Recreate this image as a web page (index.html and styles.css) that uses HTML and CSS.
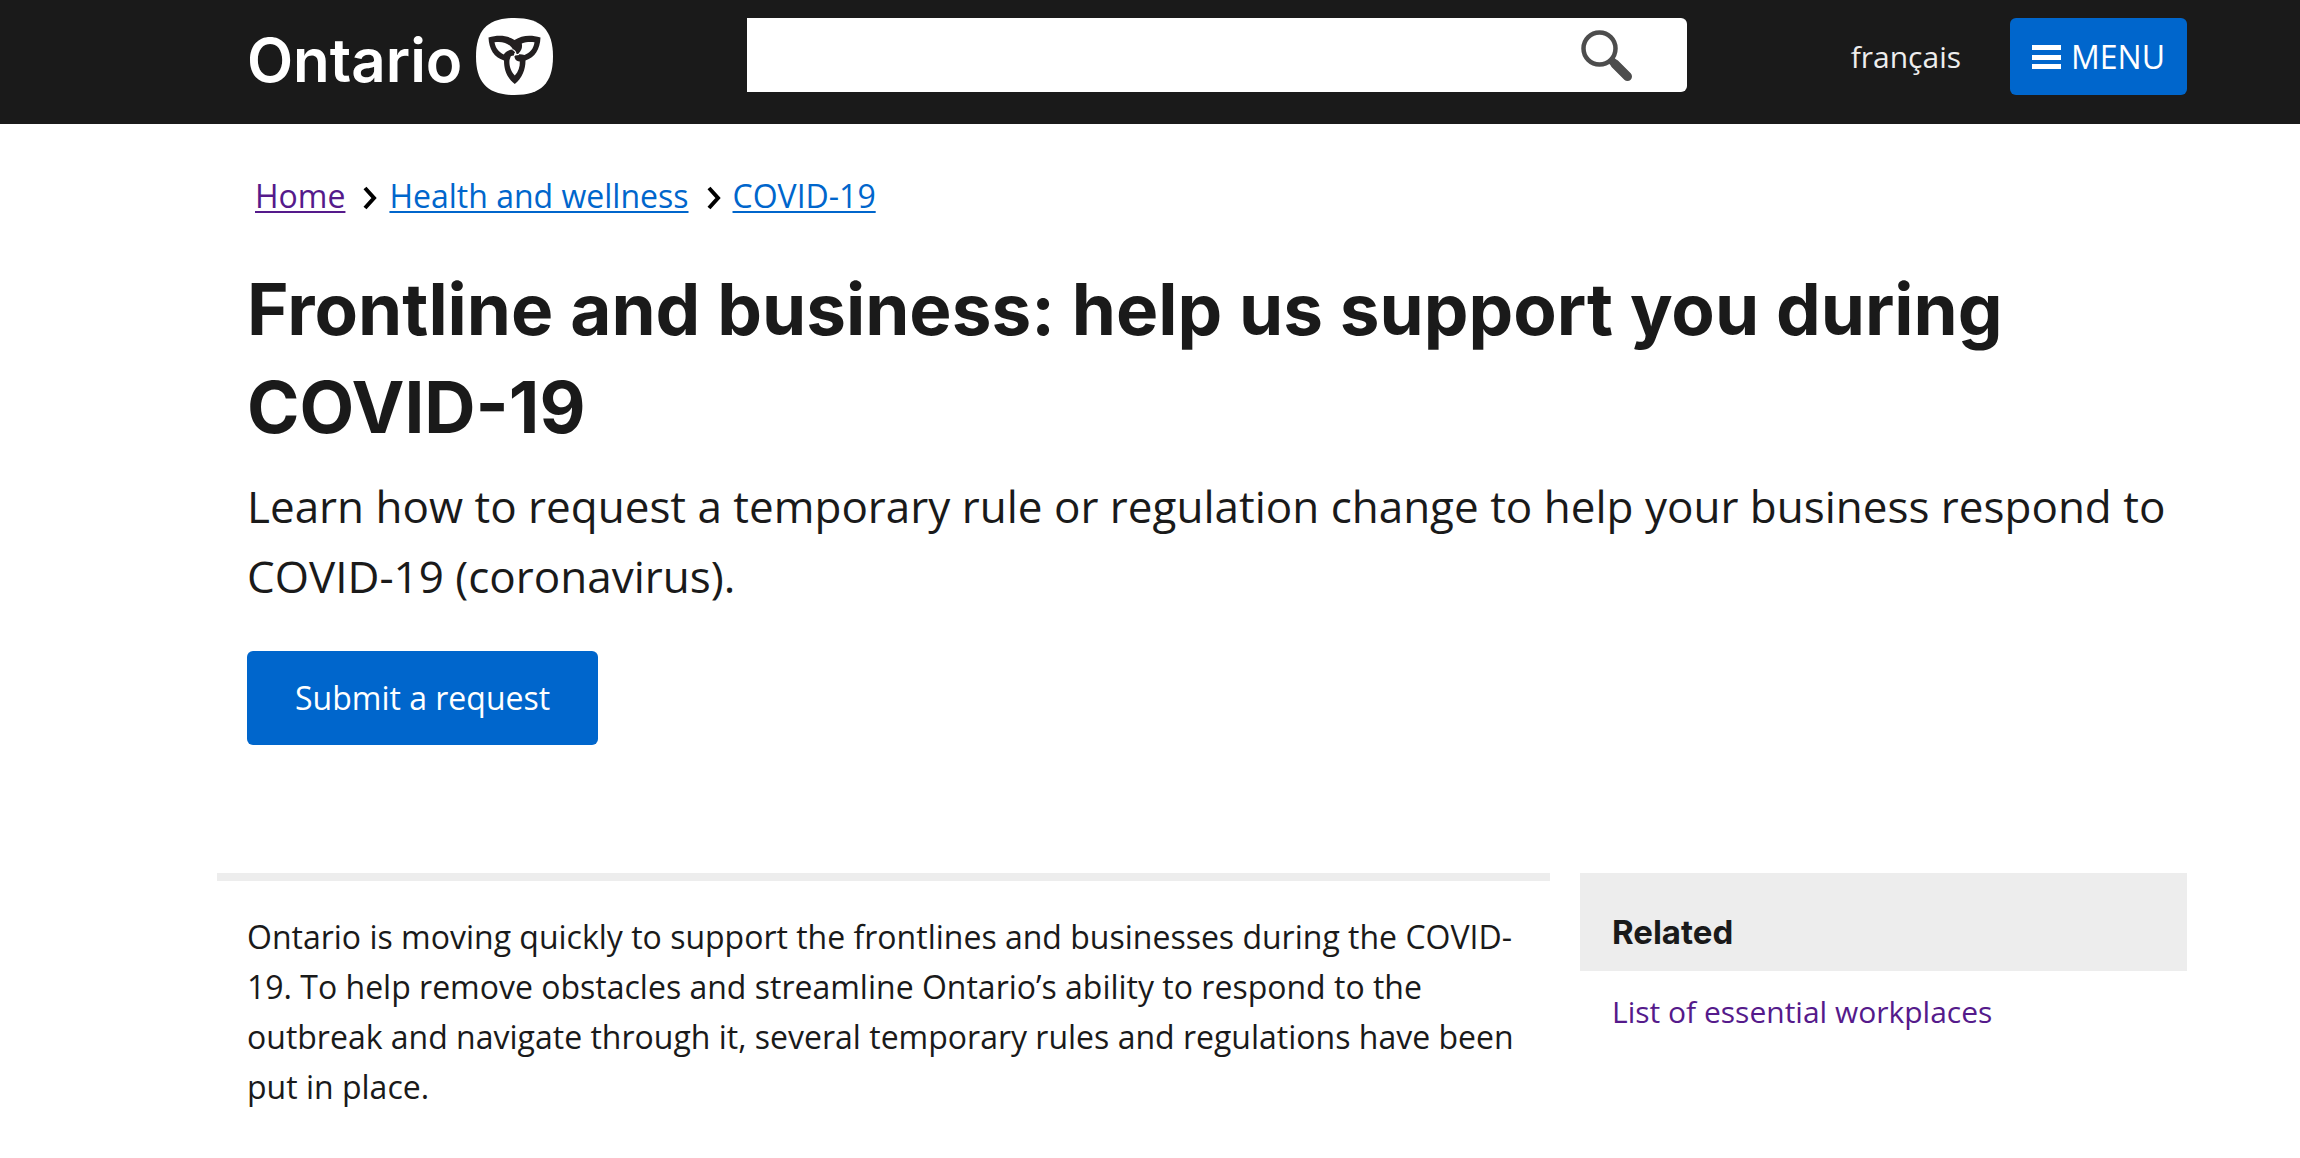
FILE: index.html
```html
<!DOCTYPE html>
<html lang="en">
<head>
<meta charset="utf-8">
<meta name="viewport" content="width=device-width, initial-scale=1">
<title>Frontline and business: help us support you during COVID-19</title>
<link rel="stylesheet" href="styles.css">
</head>
<body>
<header class="site-header">
  <a class="logo" href="#" aria-label="Ontario">
    <span class="logo-word">Ontario</span>
    <svg class="logo-mark" viewBox="0 0 77 77" aria-hidden="true">
      <path fill="#fff" d="M38.500 0C65 0 77 12 77 38.500S65 77 38.500 77 0 65 0 38.500 12 0 38.500 0Z"/>
      <path fill="#231f20" d="M12.500 19.500C22 16.500 31 17 38.500 22C46 17 55 16.500 64.500 19.500C64 31 59 39.500 49.500 42.500C49.500 52 46 60 38.800 66C31 60 28 52 28 42.500C18 39.500 13 31 12.500 19.500Z"/>
      <path fill="#fff" d="M18.500 24.300C27 23 33.500 25.500 37 31.500C33 31.500 29.500 33.500 27.800 36.500C22.500 34 19.500 30 18.500 24.300Z"/>
      <path fill="#fff" d="M58.500 24.300C57.500 31 54 35 48.500 37C46.500 36.500 44 36 42 36.500C43.500 34 47 31.500 45.800 25.500C50 24 54 23.700 58.500 24.300Z"/>
      <path fill="#fff" d="M34.800 38.300C36 37.500 37.500 37.300 38.500 37.500C38.500 40 39 43 43.800 43.500C44 49 42.500 53.500 38.800 57.500C34.500 53 33 47 33.500 42Z"/>
      <path fill="none" stroke="#fff" stroke-width="1.300" d="M36.500 31.500C39 32.500 40 34 40 36.800L43 36.300M38.500 38L39 35"/>
    </svg>
  </a>
  <form class="search" role="search">
    <input class="search-input" type="search" aria-label="Search">
    <button class="search-button" type="button" aria-label="Submit search">
      <svg class="search-icon" viewBox="0 0 52 52" aria-hidden="true">
        <circle cx="18.500" cy="18.500" r="16" fill="none" stroke="#4d4d4d" stroke-width="4.500"/>
        <path d="M30 30 47 47" stroke="#4d4d4d" stroke-width="8"/>
        <path d="M34 34 46.500 46.500" stroke="#4d4d4d" stroke-width="9" stroke-linecap="round"/>
      </svg>
    </button>
  </form>
  <a class="language" href="#" lang="fr">français</a>
  <button class="menu-button" type="button">
    <svg class="menu-icon" viewBox="0 0 29 24" aria-hidden="true"><path fill="#fff" d="M0 0h29v5H0zM0 10h29v5H0zM0 19h29v5H0z"/></svg>
    MENU
  </button>
</header>
<div class="page">
  <nav class="breadcrumbs" aria-label="Breadcrumb">
    <a class="crumb crumb-visited" href="#">Home</a>
    <svg class="chevron" viewBox="0 0 14 24" aria-hidden="true"><path d="M2 2 11 12 2 22" fill="none" stroke="#000" stroke-width="4"/></svg>
    <a class="crumb" href="#">Health and wellness</a>
    <svg class="chevron" viewBox="0 0 14 24" aria-hidden="true"><path d="M2 2 11 12 2 22" fill="none" stroke="#000" stroke-width="4"/></svg>
    <a class="crumb" href="#">COVID-19</a>
  </nav>
  <h1 class="title">Frontline and business: help us support you during COVID-19</h1>
  <p class="lead">Learn how to request a temporary rule or regulation change to help your business respond to COVID-19 (coronavirus).</p>
  <button class="submit-button" type="button">Submit a request</button>
  <div class="columns">
    <main class="content">
      <p class="body-text">Ontario is moving quickly to support the frontlines and businesses during the COVID-19. To help remove obstacles and streamline Ontario’s ability to respond to the outbreak and navigate through it, several temporary rules and regulations have been put in place.</p>
    </main>
    <aside class="related">
      <h2 class="related-title">Related</h2>
      <a class="related-link" href="#">List of essential workplaces</a>
    </aside>
  </div>
</div>
</body>
</html>
```
FILE: styles.css
```css
* {
  box-sizing: border-box;
}

body {
  margin: 0;
  background: #fff;
  color: #1a1a1a;
  font: 32px/50px "Open Sans", "Noto Sans", sans-serif;
}

button,
input {
  font: inherit;
  border: 0;
}

.site-header {
  display: flex;
  align-items: flex-start;
  min-height: 124px;
  padding: 18px 113px 0 247px;
  background: #1a1a1a;
}

.logo {
  display: flex;
  justify-content: space-between;
  width: 306px;
  height: 77px;
  margin-right: 194px;
  color: #fff;
  text-decoration: none;
}

.logo-word {
  font: 600 60px/84px Inter, sans-serif;
}

.logo-mark {
  flex: none;
  width: 77px;
  height: 77px;
}

.search {
  display: flex;
  flex: 1;
  height: 74px;
  background: #fff;
  border-radius: 0 6px 6px 0;
}

.search-input {
  flex: 1;
  min-width: 0;
  padding: 0 20px;
  background: transparent;
}

.search-button {
  display: flex;
  align-items: flex-start;
  padding: 12px 54px 0 20px;
  background: transparent;
}

.search-icon {
  width: 52px;
  height: 52px;
}

.language {
  margin: 0 49px 0 164px;
  font-size: 30px;
  line-height: 77px;
  color: #ededed;
  text-decoration: none;
}

.menu-button {
  display: flex;
  align-items: center;
  gap: 10px;
  height: 77px;
  padding: 0 22px;
  border-radius: 6px;
  background: #06c;
  color: #fff;
}

.menu-icon {
  width: 29px;
  height: 24px;
}

.page {
  padding: 47px 113px 40px 247px;
}

.breadcrumbs {
  display: flex;
  align-items: center;
  padding-left: 8px;
}

.crumb {
  color: #06c;
  text-decoration-thickness: 2px;
  text-underline-offset: 3px;
}

.crumb-visited {
  color: #551a8b;
}

.chevron {
  width: 14px;
  height: 24px;
  margin: 4px 12px 0 18px;
}

.title {
  margin: 39px 0 15px;
  font: 700 71px/98px Inter, sans-serif;
}

.lead {
  margin: 0 0 40px;
  font-size: 44px;
  line-height: 70px;
}

.submit-button {
  display: block;
  height: 94px;
  padding: 0 48px;
  border-radius: 6px;
  background: #06c;
  color: #fff;
}

.columns {
  display: grid;
  grid-template-columns: 1333fr 607fr;
  gap: 30px;
  margin: 128px 0 0 -30px;
}

.content {
  padding: 31px 30px 0;
  border-top: 8px solid #ededed;
}

.body-text {
  margin: 0;
}

.related-title {
  margin: 0 0 16px;
  padding: 34px 32px 14px;
  background: #ededed;
  font: 700 33px/50px Inter, sans-serif;
}

.related-link {
  display: block;
  padding: 0 32px;
  color: #551a8b;
  font-size: 30px;
  text-decoration: none;
}
```
